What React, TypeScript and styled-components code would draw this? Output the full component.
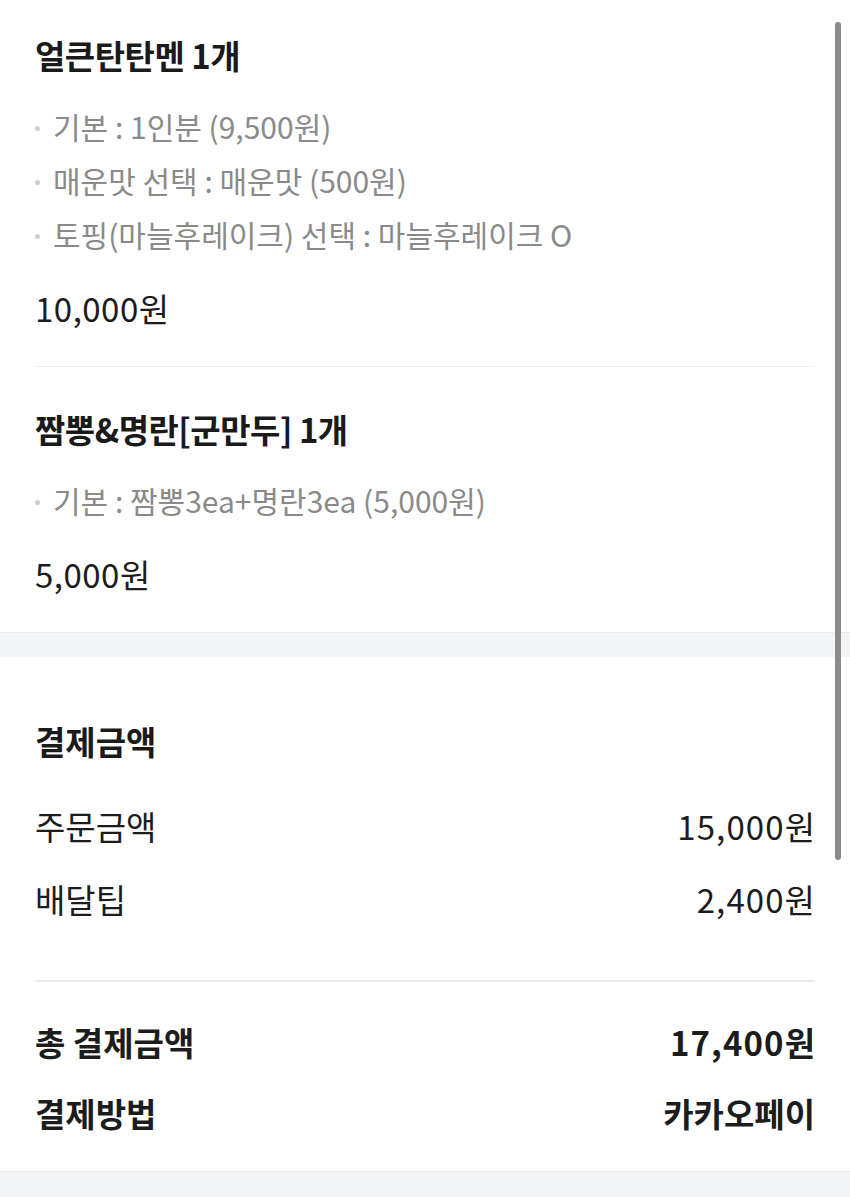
import React from "react";
import styled, { createGlobalStyle } from "styled-components";

const Global = createGlobalStyle`
  html, body { margin: 0; padding: 0; background: #ffffff; }
  body {
    font-family: "Noto Sans CJK KR", "Noto Sans", sans-serif;
    color: #1c1c1c;
    -webkit-font-smoothing: antialiased;
  }
`;

const Page = styled.div`
  position: relative;
  width: 850px;
  min-height: 1197px;
  background: #ffffff;
  display: flex;
  flex-direction: column;
`;

const Section = styled.section`
  background: #ffffff;
  padding: 0 35px;
`;

const Band = styled.div<{ $grow?: boolean }>`
  height: 24px;
  background: #f3f4f6;
  border-top: 1px solid #e9eaec;
  flex: ${(p) => (p.$grow ? "1 0 27px" : "0 0 auto")};
`;

const Item = styled.div`
  padding: 42px 0 38px;
  border-bottom: 1px solid #efefef;
  &:first-child { padding-top: 35px; }
  &:last-child { border-bottom: none; }
`;

const ItemTitle = styled.h2`
  margin: 0;
  font-size: 33px;
  line-height: 40px;
  font-weight: 700;
  letter-spacing: -0.5px;
  color: #1a1a1a;
`;

const Options = styled.ul`
  list-style: none;
  margin: 24px 0 0;
  padding: 0;
`;

const Option = styled.li`
  display: flex;
  align-items: center;
  gap: 13px;
  font-size: 30px;
  line-height: 54px;
  color: #8a8a8a;
  letter-spacing: 0;
  &::before {
    content: "";
    width: 5px;
    height: 5px;
    border-radius: 50%;
    background: #cfcfcf;
    flex: 0 0 auto;
    transform: translateY(2px);
  }
`;

const ItemPrice = styled.div`
  margin-top: 27px;
  font-size: 33px;
  line-height: 40px;
  color: #1c1c1c;
  letter-spacing: 0.5px;
`;

const SummaryTitle = styled.h3`
  margin: 0;
  padding-top: 64px;
  font-size: 33px;
  line-height: 40px;
  font-weight: 700;
  letter-spacing: 0;
  color: #1a1a1a;
`;

const RowGroup = styled.div<{ $top: number; $gap: number; $bottom: number; $divider?: boolean }>`
  display: flex;
  flex-direction: column;
  gap: ${(p) => p.$gap}px;
  padding-top: ${(p) => p.$top}px;
  padding-bottom: ${(p) => p.$bottom}px;
  border-bottom: ${(p) => (p.$divider ? "2px solid #e8e9eb" : "none")};
`;

const Row = styled.div<{ $bold?: boolean }>`
  display: flex;
  justify-content: space-between;
  align-items: center;
  font-size: 33px;
  line-height: 40px;
  font-weight: ${(p) => (p.$bold ? 700 : 400)};
  color: #1c1c1c;
`;

const Label = styled.span``;

const Value = styled.span<{ $numeric?: boolean }>`
  letter-spacing: ${(p) => (p.$numeric ? "1.1px" : "0")};
  margin-right: ${(p) => (p.$numeric ? "-1.1px" : "0")};
`;

const Scrollbar = styled.div`
  position: absolute;
  top: 22px;
  right: 9px;
  width: 6px;
  height: 838px;
  border-radius: 3px;
  background: #8b8b8b;
`;

type MenuItem = { title: string; options: string[]; price: string };

const items: MenuItem[] = [
  {
    title: "얼큰탄탄멘 1개",
    options: [
      "기본 : 1인분 (9,500원)",
      "매운맛 선택 : 매운맛 (500원)",
      "토핑(마늘후레이크) 선택 : 마늘후레이크 O",
    ],
    price: "10,000원",
  },
  {
    title: "짬뽕&명란[군만두] 1개",
    options: ["기본 : 짬뽕3ea+명란3ea (5,000원)"],
    price: "5,000원",
  },
];

export default function App() {
  return (
    <>
      <Global />
      <Page>
        <Section>
          {items.map((it) => (
            <Item key={it.title}>
              <ItemTitle>{it.title}</ItemTitle>
              <Options>
                {it.options.map((o) => (
                  <Option key={o}>{o}</Option>
                ))}
              </Options>
              <ItemPrice>{it.price}</ItemPrice>
            </Item>
          ))}
        </Section>
        <Band />
        <Section>
          <SummaryTitle>결제금액</SummaryTitle>
          <RowGroup $top={45} $gap={33} $bottom={61} $divider>
            <Row>
              <Label>주문금액</Label>
              <Value $numeric>15,000원</Value>
            </Row>
            <Row>
              <Label>배달팁</Label>
              <Value $numeric>2,400원</Value>
            </Row>
          </RowGroup>
          <RowGroup $top={40} $gap={31} $bottom={38}>
            <Row $bold>
              <Label>총 결제금액</Label>
              <Value $numeric>17,400원</Value>
            </Row>
            <Row $bold>
              <Label>결제방법</Label>
              <Value>카카오페이</Value>
            </Row>
          </RowGroup>
        </Section>
        <Band $grow />
        <Scrollbar />
      </Page>
    </>
  );
}
